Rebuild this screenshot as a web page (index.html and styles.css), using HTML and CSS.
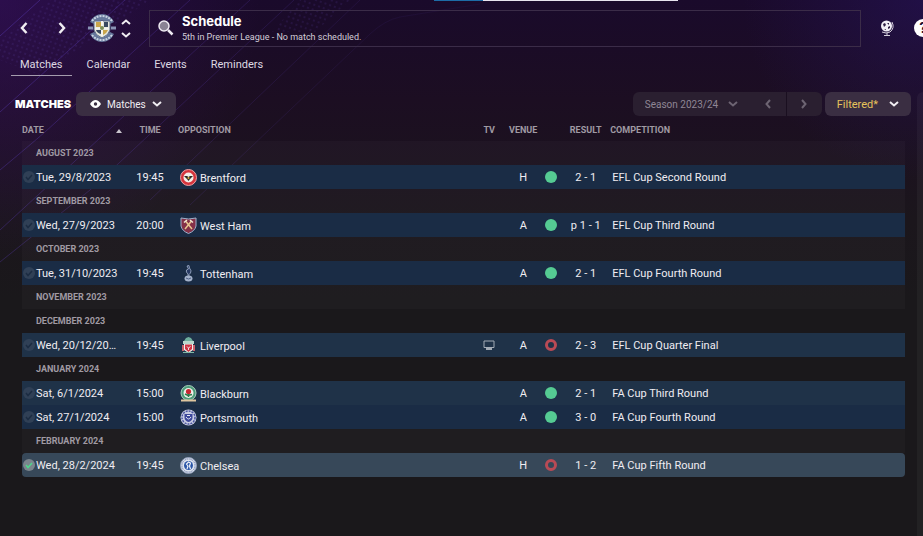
FILE: index.html
```html
<!DOCTYPE html>
<html lang="en">
<head>
    <meta charset="UTF-8">
    <meta name="viewport" content="width=device-width, initial-scale=1.0">
    <title>Schedule</title>
    <link rel="stylesheet" href="styles.css">
</head>
<body>
    <svg class="backdrop" width="640" height="330" viewBox="0 0 640 330" aria-hidden="true">
        <defs>
            <pattern id="dots" width="5" height="5" patternUnits="userSpaceOnUse" patternTransform="rotate(20)">
                <circle cx="2" cy="2" r="1" fill="#4a2f86" />
            </pattern>
            <linearGradient id="fade" x1="0" y1="0" x2="500" y2="260" gradientUnits="userSpaceOnUse">
                <stop offset="0" stop-color="#5a3ab8" stop-opacity=".45" />
                <stop offset=".6" stop-color="#5a3ab8" stop-opacity="0.1" />
                <stop offset="1" stop-color="#5a3ab8" stop-opacity="0" />
            </linearGradient>
        </defs>
        <path d="M50 0H150L40 75L0 60V40Z" fill="url(#dots)" opacity=".35" />
        <path d="M300 0H350L315 32H272Z" fill="url(#dots)" opacity=".3" />
        <g fill="none" stroke="url(#fade)">
            <path d="M40 0L0 36M125 0L0 112M190 0L45 132Q30 145 0 170M250 0L0 230M294 0L90 190L0 262M360 0L150 200M480 4L400 17Q385 20 370 34L190 205" />
        </g>
    </svg>

    <div class="progress"><span class="progress-done"></span><span class="progress-left"></span></div>

    <header class="topbar">
        <button type="button" class="icon-button" aria-label="Back">
            <svg width="8" height="12" viewBox="0 0 8 12"><path class="line bold" d="M6.500 1L2 6l4.500 5" /></svg>
        </button>
        <button type="button" class="icon-button forward" aria-label="Forward">
            <svg width="8" height="12" viewBox="0 0 8 12"><path class="line bold" d="M1.500 1L6 6l-4.500 5" /></svg>
        </button>
        <svg class="club" width="30" height="30" viewBox="0 0 30 30" aria-hidden="true">
            <path d="M3 9Q7 1 15 1T27 9L23 11Q15 4 7 11Z" fill="#66789c" />
            <path d="M5 8Q9 3 15 3T25 8" fill="none" stroke="#c9d3e2" stroke-width="2" stroke-dasharray="2 1" />
            <path d="M3 21Q7 29 15 29T27 21L23 19Q15 26 7 19Z" fill="#66789c" />
            <path d="M5 22Q9 27 15 27T25 22" fill="none" stroke="#c9d3e2" stroke-width="2" stroke-dasharray="2 1" />
            <path d="M1 15H6M24 15H29" stroke="#8a93b5" stroke-width="3" />
            <path d="M7 8H23V17Q22 22 15 25Q8 22 7 17Z" fill="#e4e6dc" stroke="#5d6d8c" />
            <path d="M9 9H14V14H9ZM16 17H21Q20 20 16 22Z" fill="#caa64c" />
            <path d="M17 9H21V14H17ZM9 17H14V21Q10 20 9 17Z" fill="#38485f" />
            <path d="M15 8V23M8 15.500H22" stroke="#f4f4ee" stroke-width="2" />
            <circle cx="15" cy="15" r="2" fill="#7c8f58" />
        </svg>
        <div class="stepper">
            <button type="button" aria-label="Previous club">
                <svg width="10" height="6" viewBox="0 0 10 6"><path class="line" d="M1 5l4-3.500L9 5" /></svg>
            </button>
            <button type="button" aria-label="Next club">
                <svg width="10" height="6" viewBox="0 0 10 6"><path class="line" d="M1 1l4 3.500L9 1" /></svg>
            </button>
        </div>
        <button type="button" class="search">
            <svg width="16" height="16" viewBox="0 0 16 16" aria-hidden="true">
                <circle cx="6" cy="6" r="5" fill="#8a8394" stroke="#eeeaf2" stroke-width="1.500" />
                <path d="M10 10l4.500 4.500" stroke="#eeeaf2" stroke-width="2.500" />
            </svg>
            <span class="search-text">
                <strong>Schedule</strong>
                <small>5th in Premier League - No match scheduled.</small>
            </span>
        </button>
        <button type="button" class="icon-button world" aria-label="World">
            <svg width="14" height="16" viewBox="0 0 14 16">
                <circle cx="6.500" cy="6" r="5.500" fill="#f1eef5" />
                <path d="M3 4l2-1 1 2-2 2zM7 3l2 0 0 2zM8 7l2-1 0 2-2 1zM4 9l2 0 0 1z" fill="#2b1a40" />
                <path d="M12 2Q15 8 10 12Q6 14 2 12M7 13V15M4 15.500H10" fill="none" stroke="#d5cfdc" />
            </svg>
        </button>
        <button type="button" class="help" aria-label="Help">?</button>
    </header>

    <nav class="tabs">
        <a href="#" class="tab active">Matches</a>
        <a href="#" class="tab">Calendar</a>
        <a href="#" class="tab">Events</a>
        <a href="#" class="tab">Reminders</a>
    </nav>

    <div class="content">
        <main>
            <div class="toolbar">
                <h1>Matches</h1>
                <label class="pill view">
                    <svg width="11" height="8" viewBox="0 0 11 8" aria-hidden="true">
                        <path d="M0 4Q2.500 0 5.500 0T11 4Q8.500 8 5.500 8T0 4Z" fill="#fff" />
                        <circle cx="5.500" cy="4" r="1.700" fill="#3a2f42" />
                    </svg>
                    <select aria-label="View"><option>Matches</option></select>
                    <svg width="10" height="6" viewBox="0 0 10 6" aria-hidden="true"><path class="line" d="M1 1l4 3.500L9 1" /></svg>
                </label>
                <div class="season">
                    <label class="season-name">
                        <select aria-label="Season" disabled><option>Season 2023/24</option></select>
                        <svg width="10" height="6" viewBox="0 0 10 6" aria-hidden="true"><path class="line" d="M1 1l4 3.500L9 1" /></svg>
                    </label>
                    <button type="button" disabled aria-label="Previous season">
                        <svg width="6" height="10" viewBox="0 0 6 10"><path class="line" d="M5 1L1.500 5L5 9" /></svg>
                    </button>
                    <button type="button" disabled aria-label="Next season">
                        <svg width="6" height="10" viewBox="0 0 6 10"><path class="line" d="M1 1l3.500 4L1 9" /></svg>
                    </button>
                </div>
                <button type="button" class="pill filtered">
                    <span>Filtered*</span>
                    <svg width="10" height="6" viewBox="0 0 10 6" aria-hidden="true"><path class="line" d="M1 1l4 3.500L9 1" /></svg>
                </button>
            </div>

            <table class="matches">
                <thead>
                    <tr>
                        <th class="date"><span>Date</span><svg width="6" height="4" viewBox="0 0 6 4" aria-hidden="true"><path d="M3 0L6 4H0Z" fill="#c9c4cd" /></svg></th>
                        <th class="time">Time</th>
                        <th class="opposition">Opposition</th>
                        <th class="tv">TV</th>
                        <th class="venue">Venue</th>
                        <th class="outcome"></th>
                        <th class="result">Result</th>
                        <th class="competition">Competition</th>
                    </tr>
                </thead>
                <tbody>
                    <tr class="month"><th colspan="8">August 2023</th></tr>
                    <tr class="match">
                        <td class="date"><svg class="check" width="12" height="12" viewBox="0 0 12 12"><circle cx="6" cy="6" r="6" /><path d="M3 6l2 2.500L9 4" /></svg>Tue, 29/8/2023</td>
                        <td class="time">19:45</td>
                        <td class="opposition"><svg class="crest" width="17" height="17" viewBox="0 0 17 17"><circle cx="8.500" cy="8.500" r="8" fill="#d6343c" stroke="#e9a3a6" /><circle cx="8.500" cy="8.500" r="5" fill="#f2efe9" /><path d="M4 7L7 7L8.500 8L10 7H13L10 10L8.500 12L7 10Z" fill="#2c2a22" /><circle cx="8.500" cy="9" r="1" fill="#d9b13c" /></svg>Brentford</td>
                        <td class="tv"></td>
                        <td class="venue">H</td>
                        <td class="outcome"><span class="dot win"></span></td>
                        <td class="result">2 - 1</td>
                        <td class="competition">EFL Cup Second Round</td>
                    </tr>
                    <tr class="month"><th colspan="8">September 2023</th></tr>
                    <tr class="match">
                        <td class="date"><svg class="check" width="12" height="12" viewBox="0 0 12 12"><circle cx="6" cy="6" r="6" /><path d="M3 6l2 2.500L9 4" /></svg>Wed, 27/9/2023</td>
                        <td class="time">20:00</td>
                        <td class="opposition"><svg class="crest" width="17" height="17" viewBox="0 0 17 17"><path d="M1 1Q8.500 3 16 1V9Q15 14 8.500 16.500Q2 14 1 9Z" fill="#843148" stroke="#9fb2cc" /><path d="M5 12L11.500 4M12 12L5.500 4" stroke="#e8c690" stroke-width="1.500" /><path d="M4 5.500L7 3M10 3L13 5.500" stroke="#f2ead6" stroke-width="1.500" /></svg>West Ham</td>
                        <td class="tv"></td>
                        <td class="venue">A</td>
                        <td class="outcome"><span class="dot win"></span></td>
                        <td class="result">p 1 - 1</td>
                        <td class="competition">EFL Cup Third Round</td>
                    </tr>
                    <tr class="month"><th colspan="8">October 2023</th></tr>
                    <tr class="match">
                        <td class="date"><svg class="check" width="12" height="12" viewBox="0 0 12 12"><circle cx="6" cy="6" r="6" /><path d="M3 6l2 2.500L9 4" /></svg>Tue, 31/10/2023</td>
                        <td class="time">19:45</td>
                        <td class="opposition"><svg class="crest" width="17" height="17" viewBox="0 0 17 17"><path d="M7 1L9 .5L9.500 3Q12 6 10.500 8L9 9.500V12H8V9Q5.500 7 6.500 5L8.500 4Z" fill="#283a63" stroke="#a6b4cd" stroke-width=".8" /><ellipse cx="8.500" cy="13.500" rx="4" ry="3" fill="#a3b1ca" /><path d="M6 13Q8.500 15 11 13" fill="none" stroke="#384a73" stroke-width=".8" /></svg>Tottenham</td>
                        <td class="tv"></td>
                        <td class="venue">A</td>
                        <td class="outcome"><span class="dot win"></span></td>
                        <td class="result">2 - 1</td>
                        <td class="competition">EFL Cup Fourth Round</td>
                    </tr>
                    <tr class="month"><th colspan="8">November 2023</th></tr>
                    <tr class="month"><th colspan="8">December 2023</th></tr>
                    <tr class="match">
                        <td class="date"><svg class="check" width="12" height="12" viewBox="0 0 12 12"><circle cx="6" cy="6" r="6" /><path d="M3 6l2 2.500L9 4" /></svg>Wed, 20/12/2023</td>
                        <td class="time">19:45</td>
                        <td class="opposition"><svg class="crest" width="17" height="17" viewBox="0 0 17 17"><path d="M4 4L6 1L8.500 0L11 1L13 4Z" fill="#6fae9c" /><path d="M3 4H14V7H3Z" fill="#b9d8cc" /><path d="M4 7H13V13L8.500 16L4 13Z" fill="#eef0ec" /><path d="M5 7.500H12V12L8.500 15L5 12Z" fill="#cf3443" /><path d="M7 9.500L8.500 11L10.500 9.500M8.500 11V13" fill="none" stroke="#f3dcdc" /><path d="M2 8H4V14H2ZM13 8H15V14H13Z" fill="#c9616a" /><path d="M3 15.500H14" stroke="#7fb7a5" /></svg>Liverpool</td>
                        <td class="tv"><svg width="12" height="10" viewBox="0 0 12 10" role="img" aria-label="Televised"><path d="M1 1H11V7.500H1Z" fill="none" stroke="#a3abb5" /><path d="M3 9H9" stroke="#a3abb5" stroke-width="2" /></svg></td>
                        <td class="venue">A</td>
                        <td class="outcome"><span class="dot loss"></span></td>
                        <td class="result">2 - 3</td>
                        <td class="competition">EFL Cup Quarter Final</td>
                    </tr>
                    <tr class="month"><th colspan="8">January 2024</th></tr>
                    <tr class="match">
                        <td class="date"><svg class="check" width="12" height="12" viewBox="0 0 12 12"><circle cx="6" cy="6" r="6" /><path d="M3 6l2 2.500L9 4" /></svg>Sat, 6/1/2024</td>
                        <td class="time">15:00</td>
                        <td class="opposition"><svg class="crest" width="17" height="17" viewBox="0 0 17 17"><circle cx="8.500" cy="8" r="7.500" fill="#4e9c7a" stroke="#a9cfbd" /><circle cx="8.500" cy="8" r="5" fill="#eef1ea" /><circle cx="8.500" cy="6.500" r="2.600" fill="#c62733" /><path d="M8.500 9V12M5 9L8 10.500L12 9.500" stroke="#2f7a4c" stroke-width="1.500" fill="none" /><path d="M1 15.500H16" stroke="#dfc6a0" stroke-width="2" /></svg>Blackburn</td>
                        <td class="tv"></td>
                        <td class="venue">A</td>
                        <td class="outcome"><span class="dot win"></span></td>
                        <td class="result">2 - 1</td>
                        <td class="competition">FA Cup Third Round</td>
                    </tr>
                    <tr class="match">
                        <td class="date"><svg class="check" width="12" height="12" viewBox="0 0 12 12"><circle cx="6" cy="6" r="6" /><path d="M3 6l2 2.500L9 4" /></svg>Sat, 27/1/2024</td>
                        <td class="time">15:00</td>
                        <td class="opposition"><svg class="crest" width="17" height="17" viewBox="0 0 17 17"><circle cx="8.500" cy="8.500" r="8" fill="#c9cde2" /><circle cx="8.500" cy="8.500" r="6.500" fill="none" stroke="#4a55a0" stroke-width="1.500" stroke-dasharray="2 1" /><path d="M4.500 5H12.500V9Q12 12 8.500 13Q5 12 4.500 9Z" fill="#3c479a" /><path d="M6 8Q8.500 12 11 8M7 6.500H10" fill="none" stroke="#e5e8f3" /></svg>Portsmouth</td>
                        <td class="tv"></td>
                        <td class="venue">A</td>
                        <td class="outcome"><span class="dot win"></span></td>
                        <td class="result">3 - 0</td>
                        <td class="competition">FA Cup Fourth Round</td>
                    </tr>
                    <tr class="month"><th colspan="8">February 2024</th></tr>
                    <tr class="match selected">
                        <td class="date"><svg class="check" width="12" height="12" viewBox="0 0 12 12"><circle cx="6" cy="6" r="6" /><path d="M3 6l2 2.500L9 4" /></svg>Wed, 28/2/2024</td>
                        <td class="time">19:45</td>
                        <td class="opposition"><svg class="crest" width="17" height="17" viewBox="0 0 17 17"><circle cx="8.500" cy="8.500" r="8" fill="#dfe4ee" stroke="#8e9cb8" /><circle cx="8.500" cy="8.500" r="6.500" fill="none" stroke="#5568a0" stroke-dasharray="1 1" /><circle cx="8.500" cy="8.500" r="4.500" fill="#2c57a8" /><path d="M7 12L8 9L6.500 7L8.500 5L10.500 6L9.500 9L10.500 12" fill="none" stroke="#f0f3fa" stroke-width="1.200" /></svg>Chelsea</td>
                        <td class="tv"></td>
                        <td class="venue">H</td>
                        <td class="outcome"><span class="dot loss"></span></td>
                        <td class="result">1 - 2</td>
                        <td class="competition">FA Cup Fifth Round</td>
                    </tr>
                </tbody>
            </table>
        </main>
        <aside class="side-panel"></aside>
    </div>
</body>
</html>
```
FILE: styles.css
```css
* {
    box-sizing: border-box;
}
body {
    margin: 0;
    min-height: 100vh;
    display: flex;
    flex-direction: column;
    overflow-x: hidden;
    font-family: Roboto, "Liberation Sans", sans-serif;
    font-size: 11px;
    color: #f0edf2;
    border-bottom: 1px solid #0b0a0c;
    background:
        radial-gradient(circle at 0 0, rgba(62, 18, 110, 0.5), transparent 260px),
        radial-gradient(circle at 100% 0, rgba(44, 24, 110, 0.4), transparent 180px),
        linear-gradient(#1a0a2b 0, #1c0e22 100px, #1b161c 220px, #1a181b 300px);
}
button, select {
    font: inherit;
    color: inherit;
    background: none;
    border: none;
    padding: 0;
    margin: 0;
    appearance: none;
    cursor: pointer;
}
svg {
    display: block;
    flex: none;
}
.line {
    fill: none;
    stroke: currentColor;
    stroke-width: 2;
}
.bold {
    stroke-width: 2.5;
}
.backdrop {
    position: absolute;
    top: 0;
    left: 0;
    z-index: -1;
}
.progress {
    display: flex;
    height: 1px;
    padding-left: 47%;
}
.progress-done {
    width: 10%;
    background: #1d6ba6;
}
.progress-left {
    width: 40%;
    background: #e8e4ee;
}

/* Top bar */
.topbar {
    display: flex;
    align-items: center;
    height: 54px;
    padding-left: 20px;
    overflow: hidden;
}
.icon-button {
    flex: none;
}
.forward {
    margin-left: 30px;
}
.club {
    margin-left: 21px;
}
.stepper {
    display: flex;
    flex-direction: column;
    gap: 7px;
    margin: 0 18px 0 4px;
}
.search {
    flex: 1;
    display: flex;
    align-items: center;
    gap: 8px;
    height: 37px;
    padding: 0 8px;
    border: 1px solid #3b2c48;
    text-align: left;
}
.search-text {
    display: flex;
    flex-direction: column;
}
.search strong {
    font-family: Inter, sans-serif;
    font-size: 13px;
    line-height: 17px;
    color: #fff;
}
.search small {
    font-size: 9px;
    line-height: 14px;
    color: #d3cdd8;
}
.world {
    margin: 0 20px 0 19px;
}
.help {
    flex: none;
    width: 18px;
    height: 18px;
    margin-right: -9px;
    border-radius: 50%;
    background: #fff;
    color: #1a0a2b;
    font-size: 14px;
    font-weight: 700;
    line-height: 18px;
}

/* Tabs */
.tabs {
    display: flex;
    gap: 6px;
    padding-left: 11px;
}
.tab {
    height: 21px;
    padding: 0 9px;
    line-height: 19px;
    color: #ded9e2;
    text-decoration: none;
    border-bottom: 1px solid transparent;
}
.tab.active {
    border-color: #a59cae;
}

/* Content */
.content {
    flex: 1;
    display: flex;
    padding-top: 16px;
}
main {
    flex: 1;
}
.side-panel {
    width: 6px;
    border-radius: 6px 0 0 0;
    background: rgba(255, 255, 255, 0.04);
}
.toolbar {
    display: flex;
    align-items: center;
    height: 24px;
    padding: 0 6px 0 15px;
}
h1 {
    margin: 0 5px 0 0;
    font-family: Inter, sans-serif;
    font-size: 11px;
    font-weight: 900;
    text-transform: uppercase;
    color: #fff;
}
.pill {
    display: flex;
    align-items: center;
    height: 24px;
    border-radius: 6px;
    background: #3a2e42;
    cursor: pointer;
}
.view {
    gap: 6px;
    padding: 0 14px;
    font-size: 10px;
}
.season {
    display: flex;
    height: 24px;
    margin-left: auto;
    margin-right: 3px;
    border-radius: 6px;
    background: #2a1f30;
    color: #6d6472;
    font-size: 10px;
}
.season select {
    color: #8f8695;
    opacity: 1;
}
.season-name {
    display: flex;
    align-items: center;
    gap: 9px;
    padding: 0 12px;
}
.season button {
    display: flex;
    align-items: center;
    justify-content: center;
    width: 36px;
}
.season button:last-child {
    border-left: 1px solid #1a0f20;
}
.filtered {
    gap: 11px;
    padding: 0 12px;
}
.filtered span {
    color: #e6c35c;
}

/* Match list */
.matches {
    width: calc(100% - 34px);
    margin: 3px 12px 60px 22px;
    table-layout: fixed;
    border-collapse: collapse;
}
.matches th, .matches td {
    height: 24px;
    padding: 0;
    font-weight: 400;
    text-align: left;
    white-space: nowrap;
}
.matches th {
    font-size: 9px;
    font-weight: 700;
    text-transform: uppercase;
    color: #a09aa3;
}
.matches thead th {
    height: 22px;
}
.matches .date {
    width: 106px;
    overflow: hidden;
    text-overflow: ellipsis;
}
.matches td.date {
    padding-right: 8px;
}
thead .date span {
    display: inline-block;
    width: 94px;
}
thead .date svg {
    display: inline-block;
    vertical-align: middle;
}
.matches .time {
    width: 44px;
    text-align: center;
}
.matches .opposition {
    width: 34%;
    padding-left: 6px;
}
.matches td.opposition {
    padding-left: 8px;
}
.matches .tv, .matches .venue {
    width: 34px;
    text-align: center;
}
.tv svg {
    margin: 0 auto;
}
.matches .outcome {
    width: 22px;
}
.matches .result {
    width: 47px;
    text-align: center;
}
.matches .competition {
    padding-left: 1px;
}
.matches td.competition {
    padding-left: 3px;
}
.matches .month th {
    padding-left: 14px;
}
tbody tr:nth-child(odd) {
    background: rgba(255, 255, 255, 0.025);
}
tbody .match {
    background: #1a2c45;
}
tbody .match:nth-child(odd) {
    background: #1f3248;
}
tbody .match.selected {
    background: none;
}
.selected td {
    background: #374859;
}
.selected td:first-child {
    border-radius: 4px 0 0 4px;
}
.selected td:last-child {
    border-radius: 0 4px 4px 0;
}
.check {
    display: inline-block;
    vertical-align: -2px;
    margin: 0 1px;
    fill: #304056;
}
.check path {
    fill: none;
    stroke: #1c2c42;
    stroke-width: 1.5;
}
.selected .check {
    fill: #7b858d;
}
.selected .check path {
    stroke: #4fd68c;
}
.crest {
    display: inline-block;
    vertical-align: -4px;
    margin-right: 3px;
}
.dot {
    display: block;
    width: 12px;
    height: 12px;
    margin: 0 auto;
    border-radius: 50%;
}
.win {
    background: #55cb93;
}
.loss {
    border: 3px solid #b94a55;
}
```
